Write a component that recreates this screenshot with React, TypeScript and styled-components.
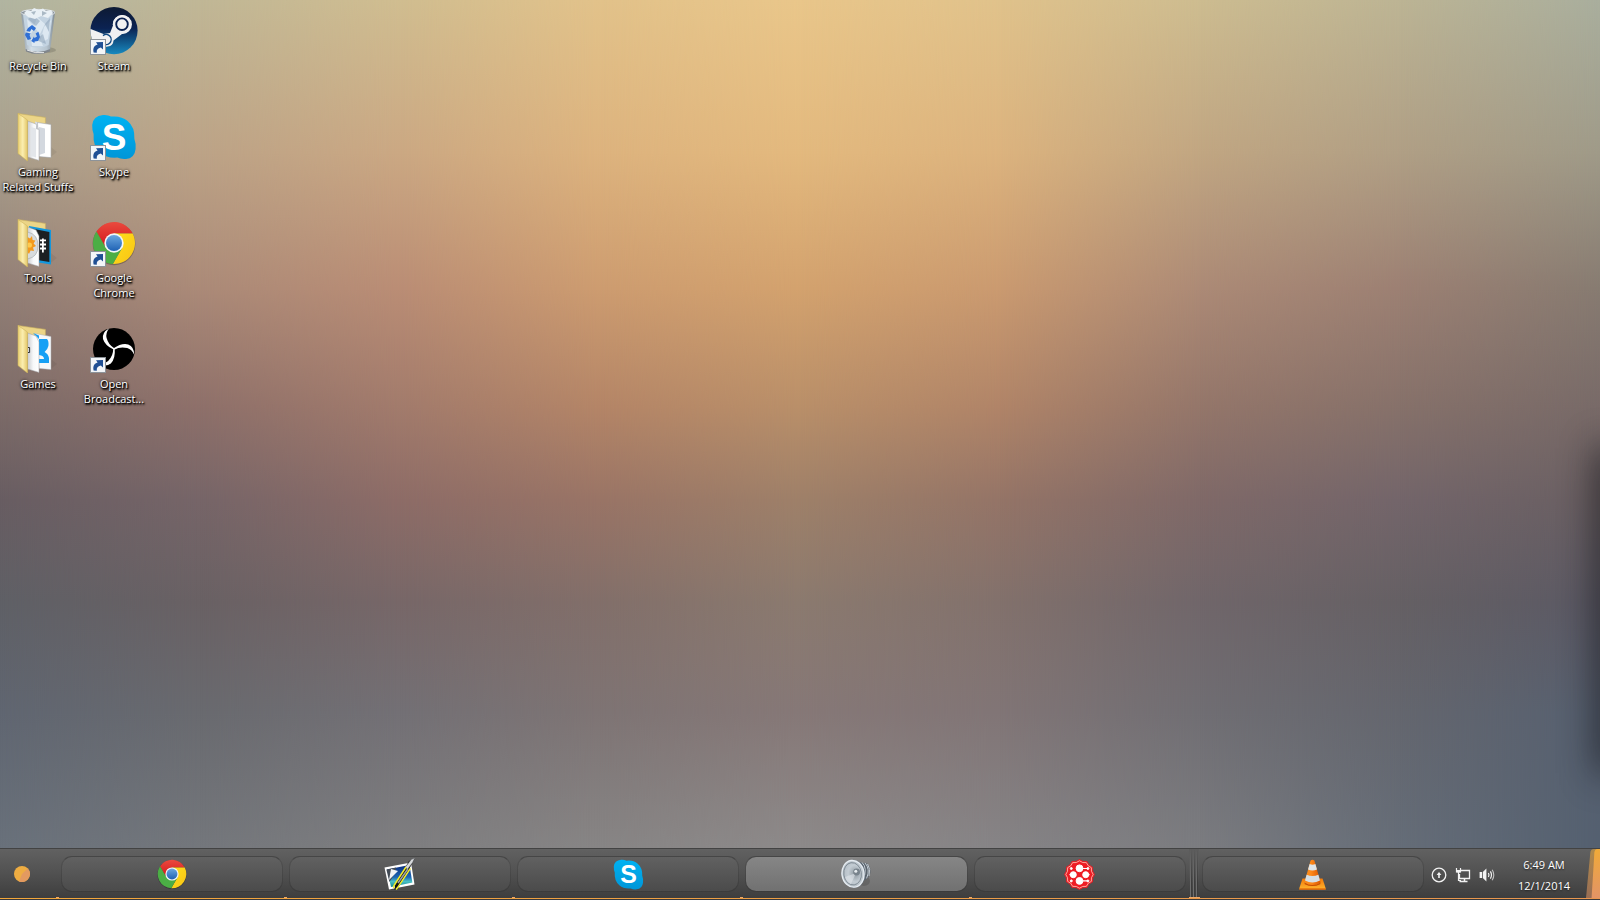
import React from "react";
import styled, { createGlobalStyle, css } from "styled-components";

const GlobalStyle = createGlobalStyle`
  *, *::before, *::after { box-sizing: border-box; }
  body {
    margin: 0;
    font-family: "Open Sans", "Noto Sans", sans-serif;
    font-size: 11px;
    color: #fff;
    background: #4a4a4a;
  }
  button { font: inherit; color: inherit; border: 0; padding: 0; background: none; }
`;

/* ---------- wallpaper ---------- */

const rows = [0, 18, 34, 48, 59, 71, 84, 100];

const wallpaperColumns: { at: number; colors: string[] }[] = [
  { at: 0, colors: ["#b1b5a1", "#aa9f8c", "#927f76", "#7c6b68", "#685d62", "#5f6066", "#606671", "#69717b"] },
  { at: 12.5, colors: ["#c0b796", "#bca387", "#ab8a78", "#8e706a", "#766568", "#696164", "#696a6f", "#74777c"] },
  { at: 25, colors: ["#d0bd90", "#cba883", "#ba8d75", "#a27b6c", "#8d6c67", "#776768", "#737075", "#7e7e80"] },
  { at: 37.5, colors: ["#e2c28a", "#ddb37e", "#cd9c70", "#b48567", "#997466", "#826f6a", "#7e7474", "#878585"] },
  { at: 50, colors: ["#e9c68a", "#e3b97e", "#d3a26e", "#b98f69", "#9e8069", "#8b7a6f", "#867877", "#8d8a8a"] },
  { at: 62.5, colors: ["#e0c28b", "#dcb37e", "#ca9a70", "#b08468", "#947467", "#82716c", "#817576", "#868486"] },
  { at: 75, colors: ["#cdbc90", "#c1a682", "#ac8a76", "#94766a", "#7f6968", "#70666a", "#706e73", "#7b7c80"] },
  { at: 87.5, colors: ["#bcb494", "#b09f85", "#9c8073", "#86716a", "#73656a", "#656064", "#64666e", "#656d78"] },
  { at: 100, colors: ["#a9ae9d", "#9f9a88", "#877b71", "#786a68", "#695f62", "#5b5964", "#566070", "#546070"] },
];

const Desktop = styled.main`
  flex: 1;
  display: grid;
  position: relative;
  overflow: hidden;
`;

const WallpaperBand = styled.div<{ $from: number; $to: number; $colors: string[] }>`
  grid-area: 1 / 1;
  background: linear-gradient(
    to bottom,
    ${(p) => p.$colors.map((c, i) => `${c} ${rows[i]}%`).join(", ")}
  );
  ${(p) =>
    p.$to > 0 &&
    css`
      mask-image: linear-gradient(to right, transparent ${p.$from}%, #000 ${p.$to}%);
    `}
`;

const EdgeShadow = styled.div`
  position: absolute;
  top: 53%;
  bottom: 9%;
  right: -20px;
  width: 20px;
  box-shadow: 0 0 36px 1px rgba(20, 20, 24, 0.9);
`;

/* ---------- desktop icons ---------- */

const IconGrid = styled.div`
  grid-area: 1 / 1;
  z-index: 1;
  display: grid;
  grid-template-columns: 76px 76px;
  grid-auto-rows: 106px;
  align-content: start;
  padding-top: 7px;
`;

const Shortcut = styled.button`
  display: flex;
  flex-direction: column;
  align-items: center;
  gap: 3px;
  svg { display: block; flex: none; }
`;

const Label = styled.span`
  line-height: 15px;
  text-align: center;
  white-space: pre-line;
  text-shadow: 1px 1px 1px #000, 1px 2px 2px #000, 0 0 3px #000;
`;

const Icon48 = ({ children, linked }: { children: React.ReactNode; linked?: boolean }) => (
  <svg width="48" height="48" viewBox="0 0 48 48" aria-hidden="true">
    {children}
    {linked && (
      <g>
        <rect x="0.5" y="32.5" width="15" height="15" fill="#f2f5f8" stroke="#8d9399" />
        <path d="M3.6 45.6C2.6 41 4.4 38.4 7.6 37.6L6 35.2 13 35v7.4L10.8 40.4C7.8 41 6.4 42.6 6.8 45.8Z" fill="#1f4f94" />
      </g>
    )}
  </svg>
);

const RecycleBinArt = () => (
  <>
    <defs>
      <linearGradient id="bin" x1="0" x2="1">
        <stop offset="0" stopColor="#8d99a3" />
        <stop offset=".3" stopColor="#d3dfe8" />
        <stop offset=".75" stopColor="#b7c5d0" />
        <stop offset="1" stopColor="#7f8a93" />
      </linearGradient>
    </defs>
    <ellipse cx="32" cy="43" rx="10" ry="3" fill="#000" opacity=".14" />
    <path d="M7 5 11.6 43.5Q24 49.5 36 43.5L41 5Z" fill="url(#bin)" />
    <path d="M9 7 13 38Q24 44 34.6 38L39 7 30 10 20 8Z" fill="#c3d3e1" />
    <path d="M13 12 21 20 15 30Z M23 10 31 17 26 27 20 20Z M30 20 37 13 34 32 26 36Z M17 32 25 29 29 39 18 39Z" fill="#e4edf5" opacity=".8" />
    <path d="M14 12 19 8 26 14 22 19Z M31 17 36 11 35 25Z M22 33 29 27 32 37Z" fill="#8fa5ba" opacity=".6" />
    <ellipse cx="24" cy="5.6" rx="17" ry="3.2" fill="#8b949c" stroke="#dfe4e8" strokeWidth="1" />
    <path d="M10 6 13 3 17 4 20 1 25 3 29 1.5 32 4 37 3 39 6 34 11 27 9 21 12 14 10Z" fill="#e9f0f5" />
    <path d="M17 5 22 4 20 8Z M28 4 33 6 28 9Z" fill="#aab9c5" />
    <path d="M11.6 42Q24 47.8 36.2 42L35.9 44.5Q24 49.5 12 44.5Z" fill="#80868c" />
    <path d="M13 43Q22 47 30 45.6" stroke="#f2f4f5" strokeWidth=".9" fill="none" />
    <g fill="#2f6fd4">
      <path d="M14 21 18 18 22 21 20 24 17.4 22 16 24.8 12.4 24Z" />
      <path d="M11.8 25.5 16.8 26.6 15.6 28 17 32 13.8 33 11 28Z" />
      <path d="M17.2 34 20 29.6 20.4 31 23 29.6 21.6 26.4 24.4 24.8 26 30 24 34 20.6 34.6 20.4 36Z" />
    </g>
  </>
);

const SteamArt = () => (
  <>
    <defs>
      <linearGradient id="steam" x1="0" y1="0" x2="0" y2="1">
        <stop offset="0" stopColor="#0d1a33" />
        <stop offset=".45" stopColor="#0b2252" />
        <stop offset="1" stopColor="#1789bf" />
      </linearGradient>
      <clipPath id="steamClip"><circle cx="24" cy="23.6" r="23.6" /></clipPath>
    </defs>
    <circle cx="24" cy="23.6" r="23.6" fill="url(#steam)" />
    <g clipPath="url(#steamClip)">
      <path d="M-2 21 13.5 27 20 26 23 18.6A9.5 9.5 0 1 1 32 27L23.5 33.4A6.6 6.6 0 0 1 10.6 35L-2 31Z" fill="#f1f1f2" />
      <circle cx="32" cy="17.2" r="9.2" fill="#f1f1f2" />
      <circle cx="32" cy="17.2" r="5.8" fill="#f1f1f2" stroke="#0b2252" strokeWidth="1.9" />
      <path d="M13 28.6A5 5 0 1 1 13 36.4" fill="none" stroke="#124a82" strokeWidth="1.4" />
    </g>
  </>
);

type FolderKind = "documents" | "tools" | "games";

const FolderArt = ({ kind }: { kind: FolderKind }) => (
  <>
    <defs>
      <linearGradient id={`flap-${kind}`} x1="0" x2="1">
        <stop offset="0" stopColor="#e9cf74" />
        <stop offset=".5" stopColor="#fbeeb0" />
        <stop offset="1" stopColor="#e3c667" />
      </linearGradient>
      <linearGradient id={`page-${kind}`} x1="0" x2="1">
        <stop offset="0" stopColor="#c9cbcf" />
        <stop offset=".5" stopColor="#f7f8f9" />
        <stop offset="1" stopColor="#fff" />
      </linearGradient>
    </defs>
    <path d="M36 44.5 43 39 37 34Z" fill="#000" opacity=".06" />
    <path d="M4 .5 31.4 4.4V14L13 12Z" fill="#ecd587" stroke="#cdb45f" strokeWidth=".6" />
    {kind === "documents" && (
      <>
        <path d="M21 8.5 30 11V44L22 42Z" fill="#d9dce0" />
        <path d="M23.5 9.5 37 11.5V44.6L25 43.6Z" fill="#fff" stroke="#a5a8ac" strokeWidth=".6" />
        <path d="M25 14 31 15.5V40L25 42Z" fill="#d3d8df" />
      </>
    )}
    {kind === "tools" && (
      <>
        <path d="M15 7 37 11V45.4L18 42.5Z" fill="#1497dc" />
        <path d="M17.5 9.6 35.4 12.9V43L20 40.6Z" fill="#1c2023" />
        <path d="M28 19.6h1.8v14H28ZM26 20.4h6v1.8h-6ZM26 24.6h6v1.8h-6ZM26 28.6h6v1.8h-6Z" fill="#fff" />
      </>
    )}
    {kind === "games" && (
      <>
        <path d="M21 8.5 37 11.5V44.6L25 43.4Z" fill="#f6f8fa" stroke="#a9adb2" strokeWidth=".5" />
        <path d="M19 8 25 10.5V14H33Q35 16 34.4 21 33.6 24.6 30.6 27 34.4 29 35 33V38H25V14Z" fill="#16a0f5" />
        <path d="M25 30V34H30Q30 30.6 25 30Z" fill="#f6f8fa" />
      </>
    )}
    <path d="M13.5 8 22 11 25 17V47.4L13.5 44Z" fill={`url(#page-${kind})`} stroke="#9d9fa3" strokeWidth=".5" />
    {kind === "documents" && (
      <>
        <path d="M17 14 22 15.6V44.6L17 43Z" fill="#e3e6ea" />
        <path d="M22 11 25 17 22 16Z" fill="#c2c5ca" />
      </>
    )}
    {kind === "tools" && (
      <>
        <path d="M13.5 13Q24 15 24 27 24 38 13.5 40Z" fill="#d8dbdd" stroke="#a0a5a8" strokeWidth=".6" />
        <path d="M13.5 18 16 19.4 18 17 18.6 21 21.4 21.4 19.6 24.4 22 27 19 28.4 20 32 16.6 31.4 15 35 13.5 33Z" fill="#f39a1e" />
        <circle cx="15.4" cy="26" r="2.6" fill="#ffc94c" />
      </>
    )}
    {kind === "games" && <path d="M14 22.5h1.6v5H14" fill="none" stroke="#333" strokeWidth="1" />}
    <path d="M4 .5 13.5 7V48L4 40.6Z" fill={`url(#flap-${kind})`} stroke="#cfb55c" strokeWidth=".6" />
  </>
);

const SkypeArt = () => (
  <>
    <defs>
      <linearGradient id="skype" x1="0" y1="0" x2="0" y2="1">
        <stop offset="0" stopColor="#00b2f2" />
        <stop offset="1" stopColor="#0096d8" />
      </linearGradient>
    </defs>
    <path
      d="M13 2Q18 1.6 21 3.6 31 2.4 37.6 8 45 14 44.4 26 46 30 45.6 36 44.6 45.4 36 46 30.6 46.4 27.4 44.6 17 45.6 10.4 40 2.6 33 3.6 21 2 17 2.2 12 3 3 13 2Z"
      fill="url(#skype)"
    />
    <text x="24" y="37" textAnchor="middle" fontFamily="Liberation Sans, sans-serif" fontWeight="700" fontSize="37" fill="#fff">S</text>
  </>
);

const ChromeArt = () => (
  <>
    <defs>
      <linearGradient id="chromeRed" x1="0" y1="0" x2="0" y2="1">
        <stop offset="0" stopColor="#ea4a3e" />
        <stop offset="1" stopColor="#d3161b" />
      </linearGradient>
      <linearGradient id="chromeBlue" x1="0" y1="0" x2="0" y2="1">
        <stop offset="0" stopColor="#6aa7e0" />
        <stop offset="1" stopColor="#1f62b4" />
      </linearGradient>
      <linearGradient id="chromeYellow" x1="0" y1="0" x2="1" y2="1">
        <stop offset="0" stopColor="#ffe01a" />
        <stop offset="1" stopColor="#f8c316" />
      </linearGradient>
    </defs>
    <circle cx="24" cy="24.8" r="21.4" fill="#000" opacity=".25" />
    <path d="M6.4 12.6A21 21 0 0 1 42.7 14.5H24L15.8 28.7Z" fill="url(#chromeRed)" />
    <path d="M42.7 14.5A21 21 0 0 1 22.9 45L32.2 28.7 24 14.5Z" fill="url(#chromeYellow)" />
    <path d="M22.9 45A21 21 0 0 1 6.4 12.6L15.8 28.7H32.2Z" fill="#4bae45" />
    <circle cx="24" cy="24" r="9.7" fill="#f3f6f8" />
    <circle cx="24" cy="24" r="8" fill="url(#chromeBlue)" />
  </>
);

const blade = "M23.6 24.6Q15 20.6 13 14 12 7.4 19 3.6 15.4 8.4 16.6 13 18.4 20 24.6 23.4Z";

const ObsArt = () => (
  <>
    <circle cx="24" cy="24" r="21" fill="#000" />
    <g fill="#fff">
      <path d={blade} />
      <path d={blade} transform="rotate(120 24 24)" />
      <path d={blade} transform="rotate(240 24 24)" />
    </g>
  </>
);

const shortcuts: { label: string; art: React.ReactNode; linked?: boolean }[] = [
  { label: "Recycle Bin", art: <RecycleBinArt /> },
  { label: "Steam", art: <SteamArt />, linked: true },
  { label: "Gaming\nRelated Stuffs", art: <FolderArt kind="documents" /> },
  { label: "Skype", art: <SkypeArt />, linked: true },
  { label: "Tools", art: <FolderArt kind="tools" /> },
  { label: "Google\nChrome", art: <ChromeArt />, linked: true },
  { label: "Games", art: <FolderArt kind="games" /> },
  { label: "Open\nBroadcast...", art: <ObsArt />, linked: true },
];

/* ---------- taskbar ---------- */

const Screen = styled.div`
  min-height: 100vh;
  display: flex;
  flex-direction: column;
`;

const Taskbar = styled.footer`
  flex: none;
  border-top: 1px solid #434343;
  background: linear-gradient(to bottom, #616161, #525252 45%, #3c3c3c);
`;

const BarRow = styled.div`
  display: flex;
  height: 49px;
`;

const AccentLine = styled.div`
  height: 2px;
  border-bottom: 1px solid #3a3a3c;
  background: linear-gradient(to right, #f2a73a, #e8964f);
`;

const StartButton = styled.button`
  width: 58px;
  flex: none;
  display: flex;
  align-items: center;
  padding-left: 14px;
`;

const Slot = styled.div<{ $grow: number }>`
  flex: ${(p) => p.$grow} 1 0;
  min-width: 0;
  display: flex;
  position: relative;
  padding: 7px 3px 6px;
  &::before {
    content: "";
    position: absolute;
    left: -2px;
    bottom: 0;
    width: 3px;
    height: 1px;
    background: #eda766;
  }
`;

const TaskButton = styled.button<{ $active?: boolean }>`
  flex: 1;
  display: flex;
  align-items: center;
  justify-content: center;
  border: 1px solid rgba(0, 0, 0, 0.1);
  border-top-color: rgba(0, 0, 0, 0.24);
  border-radius: 11px;
  background: ${(p) =>
    p.$active
      ? "linear-gradient(to bottom, #868686, #717171)"
      : "linear-gradient(to bottom, #616161, #4b4b4b)"};
  background-clip: padding-box;
`;

const Grip = styled.div`
  flex: none;
  width: 10px;
  border-bottom: 1px solid #eda766;
  background:
    linear-gradient(to bottom, #5c5c5c, transparent 70%),
    repeating-linear-gradient(to right, transparent 0 1px, #6e6e6e 1px 2px, #3c3c3c 2px 3px);
`;

const Tray = styled.div`
  flex: none;
  width: 173px;
  display: flex;
  align-items: center;
`;

const TrayButton = styled.button`
  width: 24px;
  height: 24px;
  display: grid;
  place-items: center;
  margin-top: 2px;
`;

const Clock = styled.time`
  flex: 1;
  text-align: center;
  line-height: 21px;
  padding: 2px 0 0 3px;
  text-shadow: 0 1px 2px rgba(0, 0, 0, 0.6);
`;

const ShowDesktop = styled.button`
  width: 14px;
  flex: none;
  align-self: stretch;
  svg { display: block; }
`;

const Icon32 = ({ size, box, children }: { size: number; box: string; children: React.ReactNode }) => (
  <svg width={size} height={size} viewBox={box} aria-hidden="true">{children}</svg>
);

const PictureEditorIcon = () => (
  <Icon32 size={32} box="0 0 32 32">
    <defs>
      <linearGradient id="sea" x1="0" y1="0" x2="0" y2="1">
        <stop offset="0" stopColor="#0b2c7c" />
        <stop offset=".55" stopColor="#1c66b4" />
        <stop offset=".75" stopColor="#48bfc4" />
        <stop offset="1" stopColor="#178a92" />
      </linearGradient>
    </defs>
    <path d="M.5 9.5 27 4.5 30.5 26.5 5 31.5Z" fill="#fff" />
    <path d="M3 11.5 25.4 7 28.4 24.6 7 29Z" fill="url(#sea)" />
    <path d="M2.4 11.4 12 9.6Q12 15 5.4 24Z" fill="#434b55" />
    <path d="M5 22 7 11 14 13Z" fill="#f0f3f5" />
    <path d="M25 3 30.5 1 31 .2 28 6 14 30 10.5 32 11 27Z" fill="#111" />
    <path d="M21.4 9 27.4 1.4 30.6.2 28.6 4.4 23.4 11.4Z" fill="#d7d9db" stroke="#6f7376" strokeWidth=".5" />
    <path d="M22 9 10 27.6 9.6 30" stroke="#f5ee2a" strokeWidth="1.5" fill="none" />
    <path d="M26.4 10.4 13.6 29.6 12 31.4" stroke="#f5ee2a" strokeWidth="1.5" fill="none" />
    <path d="M23.8 11 14 25" stroke="#9aa0a4" strokeWidth="1.6" />
  </Icon32>
);

const SpeakerIcon = () => (
  <Icon32 size={30} box="0 0 30 30">
    <defs>
      <radialGradient id="cone" cx=".6" cy=".5" r=".7">
        <stop offset="0" stopColor="#8d979f" />
        <stop offset=".45" stopColor="#c3ccd3" />
        <stop offset="1" stopColor="#aab4bd" />
      </radialGradient>
    </defs>
    <ellipse cx="23" cy="22" rx="6" ry="5" fill="#000" opacity=".14" />
    <path d="M17 3 26 4.6Q30 8 29.4 14 28 19 24 21L17 24Z" fill="#59636d" />
    <path d="M21 3.4Q27 9 22 21M24 4Q29.6 10 25.6 19.4M26.6 5Q30 10 28 17" stroke="#c3cbd2" strokeWidth="1" fill="none" />
    <ellipse cx="12.4" cy="14.8" rx="11.6" ry="14" fill="#5f6f80" transform="rotate(-8 12.4 14.8)" />
    <ellipse cx="12" cy="14.8" rx="11" ry="13.4" fill="url(#cone)" stroke="#e6ecf1" strokeWidth="1.4" transform="rotate(-8 12 14.8)" />
    <ellipse cx="11.6" cy="14.8" rx="8.8" ry="11.2" fill="none" stroke="#7c8791" strokeWidth=".9" transform="rotate(-8 11.6 14.8)" />
    <path d="M15 14 4 18Q6 24 10 25Z" fill="#dfe5ea" opacity=".6" />
    <circle cx="15.6" cy="13" r="3.4" fill="#78838c" />
    <circle cx="14.8" cy="12.2" r="1.5" fill="#e6ebee" />
  </Icon32>
);

const seal = Array.from({ length: 12 }, (_, i) => {
  const point = (deg: number, r: number) => {
    const a = (deg * Math.PI) / 180;
    return `${(15 + r * Math.cos(a)).toFixed(1)} ${(15 + r * Math.sin(a)).toFixed(1)}`;
  };
  return `${i === 0 ? `M${point(0, 15)}` : ""}Q${point(i * 30 + 15, 12.6)} ${point(i * 30 + 30, 15)}`;
}).join("");

const MoleculeIcon = () => (
  <Icon32 size={31} box="-0.5 -0.5 31 31">
    <path d={`${seal}Z`} fill="#ee1c24" stroke="#ee1c24" strokeWidth=".8" />
    <path d={`${seal}Z`} fill="none" stroke="#ffc4b4" strokeWidth=".9" transform="translate(1.3 1.3) scale(.913)" />
    <g fill="#fff" stroke="#fff">
      <circle cx="15" cy="8.8" r="3.4" />
      <circle cx="15" cy="21.4" r="3.4" />
      <circle cx="8.8" cy="15.2" r="3" />
      <circle cx="21.2" cy="15.2" r="3" />
      <circle cx="6.8" cy="9" r="1" />
      <circle cx="23.4" cy="9" r="1" />
      <circle cx="6.8" cy="21.4" r="1" />
      <circle cx="23.4" cy="21.4" r="1" />
      <path d="M18 9h5M18 21.4h5M5 15.2h5M20 15.2h5" strokeWidth="1.2" />
    </g>
  </Icon32>
);

const ConeIcon = () => (
  <Icon32 size={31} box="0 0 31 31">
    <defs>
      <linearGradient id="vlc" x1="0" x2="1">
        <stop offset="0" stopColor="#f58a1c" />
        <stop offset=".4" stopColor="#ff8a1a" />
        <stop offset="1" stopColor="#d95600" />
      </linearGradient>
      <linearGradient id="vlcBase" x1="0" y1="0" x2="0" y2="1">
        <stop offset="0" stopColor="#f27a0a" />
        <stop offset="1" stopColor="#ffb52e" />
      </linearGradient>
    </defs>
    <path d="M5.5 19.5H25.5L28.6 29V30.6H2.4V29Z" fill="url(#vlcBase)" />
    <path d="M2.4 29.4h26.2v1.3H2.4Z" fill="#e05f00" />
    <path d="M13.6 1.4Q15.5 0 17.4 1.4L23.6 23.6Q15.5 29 7.4 23.6Z" fill="url(#vlc)" />
    <path d="M7.4 23.6Q15.5 28.6 23.6 23.6L23.2 25.2Q15.5 29 7.8 25.2Z" fill="#c94f00" />
    <path d="M12.6 5Q15.5 6.4 18.4 5L20 10.4Q15.5 12.4 11 10.4Z" fill="#dfe6ea" />
    <path d="M9.6 15.8Q15.5 18.4 21.4 15.8L23 21.6Q15.5 25.4 8 21.6Z" fill="#d6dee3" />
  </Icon32>
);

const ChromeSmall = () => <Icon32 size={30} box="2 2 44 44"><ChromeArt /></Icon32>;
const SkypeSmall = () => <Icon32 size={31} box="1 1 46 46"><SkypeArt /></Icon32>;

const tasks: { name: string; icon: React.ReactNode; grow: number; active?: boolean }[] = [
  { name: "Google Chrome", icon: <ChromeSmall />, grow: 228 },
  { name: "Picture editor", icon: <PictureEditorIcon />, grow: 228 },
  { name: "Skype", icon: <SkypeSmall />, grow: 228 },
  { name: "Sound", icon: <SpeakerIcon />, grow: 228, active: true },
  { name: "Molecule", icon: <MoleculeIcon />, grow: 218 },
];

export default function App() {
  return (
    <>
      <GlobalStyle />
      <Screen>
        <Desktop>
          {wallpaperColumns.map((column, i) => (
            <WallpaperBand
              key={column.at}
              $from={i ? wallpaperColumns[i - 1].at : 0}
              $to={column.at}
              $colors={column.colors}
            />
          ))}
          <EdgeShadow />
          <IconGrid>
            {shortcuts.map((s) => (
              <Shortcut key={s.label} type="button">
                <Icon48 linked={s.linked}>{s.art}</Icon48>
                <Label>{s.label}</Label>
              </Shortcut>
            ))}
          </IconGrid>
        </Desktop>

        <Taskbar>
          <BarRow>
            <StartButton type="button" aria-label="Start">
              <svg width="16" height="16" viewBox="0 0 16 16" aria-hidden="true">
                <circle cx="8" cy="8" r="8" fill="#eead42" />
                <path d="M8 8 13.6 2.4A8 8 0 0 1 5 15.4Z" fill="#e39a60" />
              </svg>
            </StartButton>
            {tasks.map((t) => (
              <Slot key={t.name} $grow={t.grow}>
                <TaskButton type="button" aria-label={t.name} $active={t.active}>{t.icon}</TaskButton>
              </Slot>
            ))}
            <Grip />
            <Slot $grow={228}>
              <TaskButton type="button" aria-label="Media player"><ConeIcon /></TaskButton>
            </Slot>
            <Tray>
              <TrayButton type="button" aria-label="Show hidden icons">
                <svg width="16" height="16" viewBox="0 0 16 16" fill="none" stroke="#f2f2f2" aria-hidden="true">
                  <circle cx="8" cy="8" r="6.8" strokeWidth="1.3" />
                  <path d="M8 11V6" strokeWidth="1.6" />
                  <path d="M5.6 8 8 5 10.4 8Z" fill="#f2f2f2" stroke="none" />
                </svg>
              </TrayButton>
              <TrayButton type="button" aria-label="Network">
                <svg width="16" height="16" viewBox="0 0 16 16" fill="none" stroke="#f2f2f2" aria-hidden="true">
                  <path d="M6 3.5H14.5V11.5H4.5V7" strokeWidth="1.3" />
                  <path d="M9.5 11.5V14M4.5 14.5H12.5" strokeWidth="1.5" />
                  <path d="M1.5 1V5H5.5V1M3.5 5V13.5H6" strokeWidth="1.2" />
                  <path d="M1.5 3h4V5.4h-4Z" fill="#f2f2f2" stroke="none" />
                </svg>
              </TrayButton>
              <TrayButton type="button" aria-label="Volume">
                <svg width="16" height="16" viewBox="0 0 16 16" fill="none" stroke="#f2f2f2" aria-hidden="true">
                  <path d="M.6 5H3V11H.6ZM3.8 5 7.4 1.4V14.6L3.8 11Z" fill="#f2f2f2" stroke="none" />
                  <path d="M9.4 6Q10.6 8 9.4 10" strokeWidth="1.2" />
                  <path d="M11.4 4.4Q13.6 8 11.4 11.6" strokeWidth="1.2" />
                  <path d="M13.2 2.8Q16.4 8 13.2 13.2" strokeWidth="1.1" opacity=".7" />
                </svg>
              </TrayButton>
              <Clock dateTime="2014-12-01T06:49">
                6:49 AM
                <br />
                12/1/2014
              </Clock>
              <ShowDesktop type="button" aria-label="Show desktop">
                <svg width="14" height="49" viewBox="0 0 14 49" aria-hidden="true">
                  <defs>
                    <linearGradient id="peek" x1="0" y1="0" x2="0" y2="1">
                      <stop offset="0" stopColor="#f0aa38" />
                      <stop offset="1" stopColor="#e29466" />
                    </linearGradient>
                  </defs>
                  <path d="M0 49 4.4 3Q5 0 8 0H14V49Z" fill="url(#peek)" opacity=".55" />
                  <path d="M5.6 49 8.4 3Q9 0 11 0H14V49Z" fill="url(#peek)" />
                </svg>
              </ShowDesktop>
            </Tray>
          </BarRow>
          <AccentLine />
        </Taskbar>
      </Screen>
    </>
  );
}
